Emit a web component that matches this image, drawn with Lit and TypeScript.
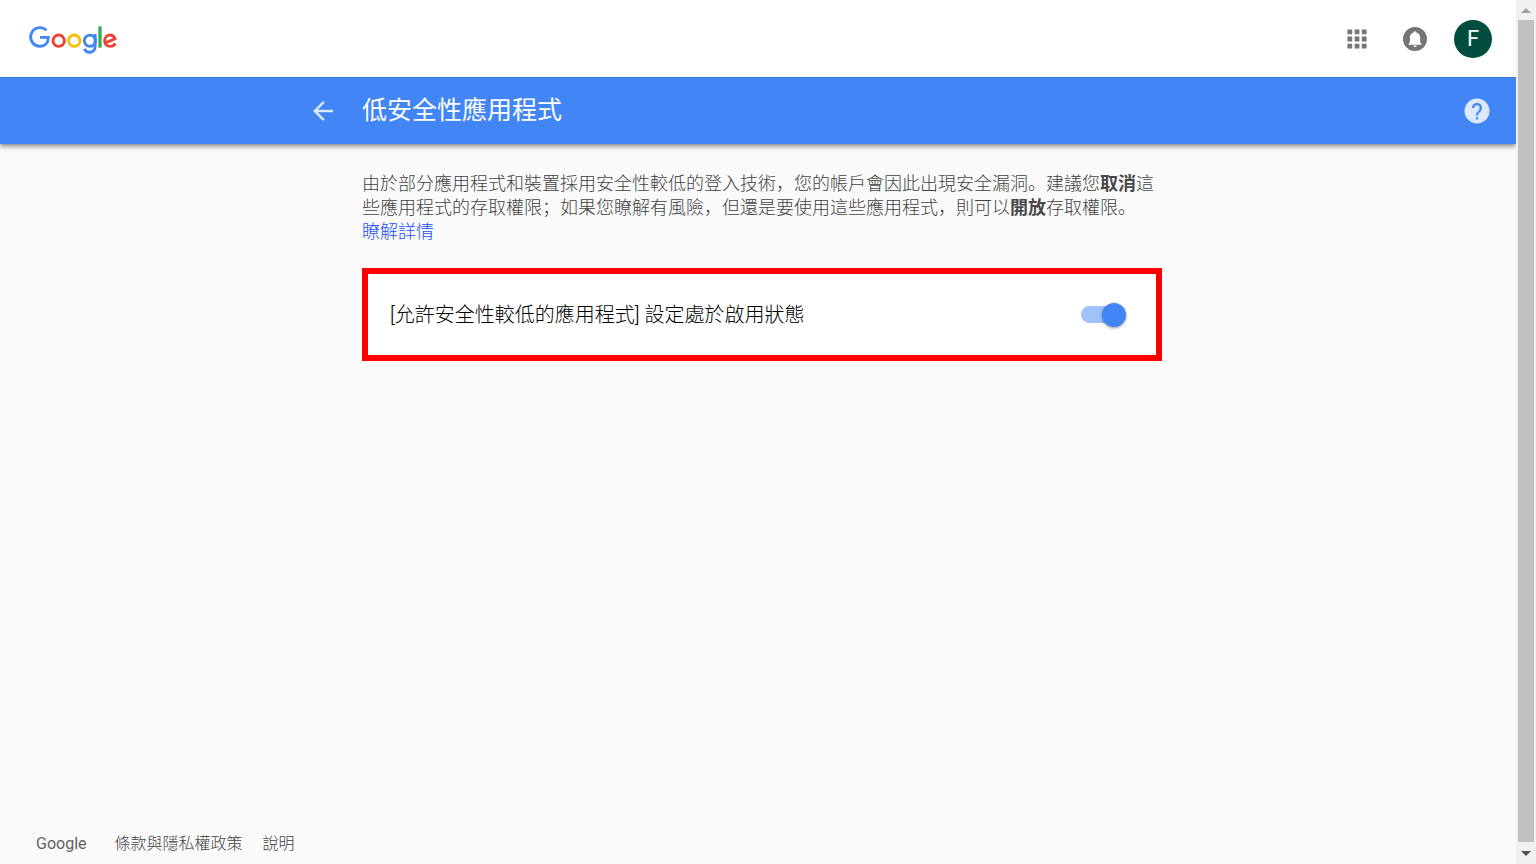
import { LitElement, html, css } from "lit";
import { customElement, state } from "lit/decorators.js";

@customElement("google-logo")
class GoogleLogo extends LitElement {
  static styles = css`
    :host { display: block; }
    svg { display: block; width: 88px; height: 29px; fill: none; stroke-width: 2.9; }
    .blue { stroke: #4285f4; }
    .red { stroke: #ea4335; }
    .yellow { stroke: #fbbc05; }
    .green { stroke: #34a853; stroke-width: 3.2; }
  `;

  render() {
    return html`
      <svg viewBox="0 0 88 29" role="img" aria-label="Google">
        <path class="blue" d="M17.4 4.3A9.3 9.3 0 1 0 10.8 20.3C16 20.3 19.3 16.8 19.3 11.4H11" />
        <circle class="red" cx="29.7" cy="14.7" r="5.7" />
        <circle class="yellow" cx="45.3" cy="14.7" r="5.7" />
        <circle class="blue" cx="60.9" cy="14.7" r="5.6" />
        <path class="blue" d="M66.1 8V20.3C66.1 27.600 57.600 28 55.400 22.800" />
        <path class="green" d="M71 0.300V21.700" />
        <path class="red" d="M76.400 16.800L86 12.800C84.700 9.300 82.300 9 81.200 9A5.700 5.700 0 0 0 75.600 14.700C75.600 18 78 20.400 81.300 20.400C83.600 20.400 85.400 19.300 86.400 17.600" />
      </svg>
    `;
  }
}

@customElement("page-scrollbar")
class PageScrollbar extends LitElement {
  static styles = css`
    :host {
      display: grid;
      grid-template-rows: 20px 1fr 22px;
      justify-items: center;
      align-items: center;
      height: 100vh;
      position: sticky;
      top: 0;
      background: #f1f1f1;
    }
    svg { display: block; width: 10px; height: 5px; }
    .up { fill: #a3a3a3; }
    .down { fill: #505050; }
    .thumb { width: 16px; height: 100%; background: #c1c1c1; }
  `;

  render() {
    return html`
      <svg class="up" viewBox="0 0 10 5"><path d="M0 5L5 0L10 5Z" /></svg>
      <div class="thumb"></div>
      <svg class="down" viewBox="0 0 10 5"><path d="M0 0L5 5L10 0Z" /></svg>
    `;
  }
}

@customElement("app-root")
class AppRoot extends LitElement {
  @state() private enabled = true;

  static styles = css`
    :host {
      display: grid;
      grid-template-columns: minmax(0, 1fr) 20px;
      min-height: 100vh;
      background: #fafafa;
      color: #424242;
      font-family: Roboto, "Noto Sans CJK SC", sans-serif;
      font-size: 18px;
      font-weight: 300;
      line-height: 24px;
    }
    * { box-sizing: border-box; }
    a { text-decoration: none; }
    button {
      display: block;
      margin: 0;
      padding: 0;
      border: 0;
      background: none;
      font: inherit;
      cursor: pointer;
    }
    svg { display: block; }
    .page { display: flex; flex-direction: column; min-height: 100vh; }
    .header {
      display: flex;
      align-items: center;
      justify-content: space-between;
      height: 77px;
      padding: 0 14px 0 29px;
      background: #fff;
    }
    .logo { padding-top: 4px; }
    .actions {
      display: grid;
      grid-template-columns: repeat(3, 58px);
      align-items: center;
      justify-items: center;
    }
    .icon { width: 30px; height: 30px; }
    .gray { fill: #757575; }
    .actions .avatar {
      width: 38px;
      height: 38px;
      border-radius: 50%;
      background: #004d40;
      color: #fff;
      font-size: 22px;
      font-weight: 400;
      line-height: 38px;
      text-align: center;
    }
    .bar {
      display: grid;
      grid-template-columns: minmax(46px, 1fr) minmax(0, 808px) minmax(54px, 1fr);
      align-items: center;
      height: 67px;
      background: #4285f4;
      box-shadow: inset 0 1px #3b78dc, 0 2px 5px rgba(0, 0, 0, 0.5);
      clip-path: inset(0 0 -12px 0);
      color: #fff;
    }
    .back { justify-self: end; margin-right: 16px; }
    .help { justify-self: end; margin-right: 24px; }
    .pale { fill: #dce8fd; }
    .bar h1 {
      margin: 0;
      padding-left: 8px;
      font-size: 25px;
      font-weight: 400;
      line-height: 32px;
    }
    .main {
      flex: 1;
      width: 100%;
      max-width: 808px;
      margin: 0 auto;
      padding: 28px 0 24px 8px;
    }
    .intro { margin: 0 0 24px; padding-right: 8px; }
    .intro strong { font-weight: 700; color: #484848; }
    .intro a { color: #1a4dff; }
    .card {
      display: flex;
      align-items: center;
      justify-content: space-between;
      min-height: 93px;
      padding: 0 30px 0 22px;
      border: 6px solid #f00;
      background: #fff;
      color: #000;
      font-size: 20px;
      line-height: 28px;
    }
    .switch {
      appearance: none;
      display: grid;
      grid-template-columns: 45px;
      align-items: center;
      width: 45px;
      height: 24px;
      margin: 0;
      cursor: pointer;
    }
    .switch::before,
    .switch::after { content: ""; grid-area: 1 / 1; }
    .switch::before {
      width: 42px;
      height: 17px;
      border-radius: 9px;
      background: #bdbdbd;
    }
    .switch::after {
      width: 24px;
      height: 24px;
      border-radius: 50%;
      background: #fafafa;
      box-shadow: 0 1px 3px rgba(0, 0, 0, 0.4);
    }
    .switch:checked::before { background: #a0c2fa; }
    .switch:checked::after { justify-self: end; background: #4285f4; }
    .footer {
      display: flex;
      gap: 20px;
      padding: 0 36px 8px;
      font-size: 16px;
    }
    .footer a { color: #424242; }
    .footer .home { margin-right: 8px; color: #616161; font-weight: 400; }
  `;

  private toggle(event: Event) {
    this.enabled = (event.target as HTMLInputElement).checked;
  }

  render() {
    return html`
      <div class="page">
        <header class="header">
          <a class="logo" href="#"><google-logo></google-logo></a>
          <div class="actions">
            <button aria-label="Google 應用程式">
              <svg class="icon gray" viewBox="-0.5 -0.5 25 25">
                <path d="M4 8h4V4H4v4zm6 12h4v-4h-4v4zm-6 0h4v-4H4v4zm0-6h4v-4H4v4zm6 0h4v-4h-4v4zm6-10v4h4V4h-4zm-6 4h4V4h-4v4zm6 6h4v-4h-4v4zm0 6h4v-4h-4v4z" />
              </svg>
            </button>
            <button aria-label="通知">
              <svg class="icon gray" viewBox="0 0 30 30">
                <path fill-rule="evenodd" d="M15 3a12 12 0 1 0 0 24a12 12 0 1 0 0-24zM15 7.2c.8 0 1.3.6 1.3 1.4c2.5.6 3.8 2.6 3.8 5.2v4.500l1.400 1.600v.8H8.500v-.8l1.400-1.600v-4.500c0-2.600 1.300-4.600 3.800-5.200c0-.8.5-1.400 1.300-1.400zM13.300 21.400h3.400a1.700 1.500 0 0 1-3.400 0z" />
              </svg>
            </button>
            <button class="avatar" aria-label="帳戶 F">F</button>
          </div>
        </header>

        <div class="bar">
          <button class="back" aria-label="返回">
            <svg class="icon pale" viewBox="0 0 24 24">
              <path d="M20 11H7.83l5.59-5.59L12 4l-8 8 8 8 1.41-1.41L7.83 13H20v-2z" />
            </svg>
          </button>
          <h1>低安全性應用程式</h1>
          <button class="help" aria-label="說明">
            <svg class="icon pale" viewBox="0 0 24 24">
              <path fill-rule="evenodd" d="M12 2a10 10 0 1 0 0 20a10 10 0 1 0 0-20zM11.1 17h1.8v1.800h-1.800zM12.900 15.600h-1.800c0-2.900 3-3.700 3-6.100a2.100 2.100 0 0 0-4.200 0H8a4 4 0 0 1 8 0c0 3.100-3.100 3.500-3.100 6.100z" />
            </svg>
          </button>
        </div>

        <main class="main">
          <p class="intro">
            由於部分應用程式和裝置採用安全性較低的登入技術，您的帳戶會因此出現安全漏洞。建議您<strong>取消</strong>這些應用程式的存取權限；如果您瞭解有風險，但還是要使用這些應用程式，則可以<strong>開放</strong>存取權限。<br /><a href="#">瞭解詳情</a>
          </p>
          <div class="card">
            <label for="less-secure">[允許安全性較低的應用程式] 設定處於啟用狀態</label>
            <input
              id="less-secure"
              class="switch"
              type="checkbox"
              role="switch"
              .checked=${this.enabled}
              @change=${this.toggle}
            />
          </div>
        </main>

        <footer class="footer">
          <a class="home" href="#">Google</a>
          <a href="#">條款與隱私權政策</a>
          <a href="#">說明</a>
        </footer>
      </div>
      <page-scrollbar aria-hidden="true"></page-scrollbar>
    `;
  }
}
